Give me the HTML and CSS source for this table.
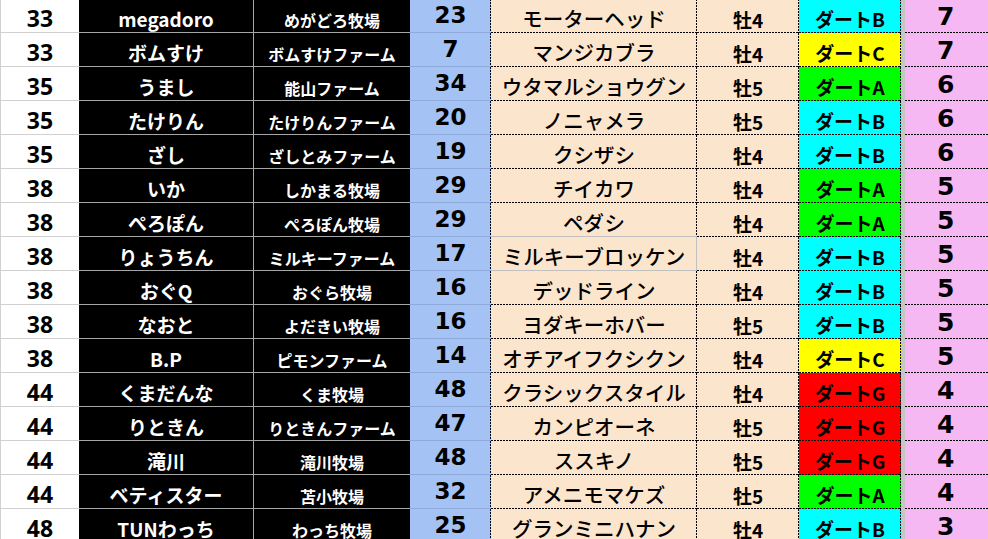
FILE: index.html
```html
<!DOCTYPE html>
<html lang="ja">
<head>
<meta charset="utf-8">
<title>Sheet</title>
<link rel="stylesheet" href="styles.css">
</head>
<body>
<div class="sheet">
  <div class="c c1">33</div><div class="c c2">megadoro</div><div class="c c3">めがどろ牧場</div><div class="c c4">23</div><div class="c c5">モーターヘッド</div><div class="c c6">牡4</div><div class="c c7 b">ダートB</div><div class="c c8">7</div>
  <div class="c c1">33</div><div class="c c2">ボムすけ</div><div class="c c3">ボムすけファーム</div><div class="c c4">7</div><div class="c c5">マンジカブラ</div><div class="c c6">牡4</div><div class="c c7 cc">ダートC</div><div class="c c8">7</div>
  <div class="c c1">35</div><div class="c c2">うまし</div><div class="c c3">能山ファーム</div><div class="c c4">34</div><div class="c c5">ウタマルショウグン</div><div class="c c6">牡5</div><div class="c c7 a">ダートA</div><div class="c c8">6</div>
  <div class="c c1">35</div><div class="c c2">たけりん</div><div class="c c3">たけりんファーム</div><div class="c c4">20</div><div class="c c5">ノニャメラ</div><div class="c c6">牡5</div><div class="c c7 b">ダートB</div><div class="c c8">6</div>
  <div class="c c1">35</div><div class="c c2">ざし</div><div class="c c3">ざしとみファーム</div><div class="c c4">19</div><div class="c c5">クシザシ</div><div class="c c6">牡4</div><div class="c c7 b">ダートB</div><div class="c c8">6</div>
  <div class="c c1">38</div><div class="c c2">いか</div><div class="c c3">しかまる牧場</div><div class="c c4">29</div><div class="c c5">チイカワ</div><div class="c c6">牡4</div><div class="c c7 a">ダートA</div><div class="c c8">5</div>
  <div class="c c1">38</div><div class="c c2">ぺろぽん</div><div class="c c3">ぺろぽん牧場</div><div class="c c4">29</div><div class="c c5">ペダシ</div><div class="c c6">牡4</div><div class="c c7 a">ダートA</div><div class="c c8">5</div>
  <div class="c c1">38</div><div class="c c2">りょうちん</div><div class="c c3">ミルキーファーム</div><div class="c c4">17</div><div class="c c5 boxed">ミルキーブロッケン</div><div class="c c6">牡4</div><div class="c c7 b">ダートB</div><div class="c c8">5</div>
  <div class="c c1">38</div><div class="c c2">おぐQ</div><div class="c c3">おぐら牧場</div><div class="c c4">16</div><div class="c c5">デッドライン</div><div class="c c6">牡4</div><div class="c c7 b">ダートB</div><div class="c c8">5</div>
  <div class="c c1">38</div><div class="c c2">なおと</div><div class="c c3">よだきい牧場</div><div class="c c4">16</div><div class="c c5">ヨダキーホバー</div><div class="c c6">牡5</div><div class="c c7 b">ダートB</div><div class="c c8">5</div>
  <div class="c c1">38</div><div class="c c2">B.P</div><div class="c c3">ピモンファーム</div><div class="c c4">14</div><div class="c c5">オチアイフクシクン</div><div class="c c6">牡4</div><div class="c c7 cc">ダートC</div><div class="c c8">5</div>
  <div class="c c1">44</div><div class="c c2">くまだんな</div><div class="c c3">くま牧場</div><div class="c c4">48</div><div class="c c5">クラシックスタイル</div><div class="c c6">牡4</div><div class="c c7 g">ダートG</div><div class="c c8">4</div>
  <div class="c c1">44</div><div class="c c2">りときん</div><div class="c c3">りときんファーム</div><div class="c c4">47</div><div class="c c5">カンピオーネ</div><div class="c c6">牡5</div><div class="c c7 g">ダートG</div><div class="c c8">4</div>
  <div class="c c1">44</div><div class="c c2">滝川</div><div class="c c3">滝川牧場</div><div class="c c4">48</div><div class="c c5">ススキノ</div><div class="c c6">牡5</div><div class="c c7 g">ダートG</div><div class="c c8">4</div>
  <div class="c c1">44</div><div class="c c2">ベティスター</div><div class="c c3">苫小牧場</div><div class="c c4">32</div><div class="c c5">アメニモマケズ</div><div class="c c6">牡5</div><div class="c c7 a">ダートA</div><div class="c c8">4</div>
  <div class="c c1">48</div><div class="c c2">TUNわっち</div><div class="c c3">わっち牧場</div><div class="c c4">25</div><div class="c c5">グランミニハナン</div><div class="c c6">牡4</div><div class="c c7 b">ダートB</div><div class="c c8">3</div>
</div>
</body>
</html>
```
FILE: styles.css
```css
html, body {
  margin: 0;
  padding: 0;
  background: #ffffff;
  overflow: hidden;
}

.sheet {
  display: grid;
  grid-template-columns: 79px 175px 156px 81px 206px 102px 106px 90px;
  grid-auto-rows: 34px;
  margin-top: -1px;
  font-family: "Noto Sans CJK JP", "Noto Sans", sans-serif;
  font-weight: 700;
  color: #000;
}

.c {
  box-sizing: border-box;
  display: flex;
  justify-content: center;
  align-items: center;
  line-height: 0.8;
  white-space: nowrap;
  overflow: hidden;
}

.c1 {
  background: #ffffff;
  border-left: 1px solid #d0d0d0;
  border-bottom: 1px solid #d0d0d0;
  font-family: "Noto Sans", sans-serif;
  font-size: 23px;
  padding-top: 6px;
}

.c2 {
  background: #000;
  color: #fff;
  border-right: 1px solid #a6a6a6;
  border-bottom: 1px solid #a6a6a6;
  font-size: 19px;
  padding-top: 6px;
}

.c3 {
  background: #000;
  color: #fff;
  border-bottom: 1px solid #a6a6a6;
  font-size: 16px;
  padding-top: 10px;
}

.c4 {
  background-color: #a4c2f4;
  background-image: linear-gradient(to bottom, #000 0 2px, transparent 2px 3px);
  background-size: 1px 3px;
  background-repeat: repeat-y;
  background-position: right top;
  border-bottom: 1px solid #8eaadb;
  font-family: "DejaVu Sans", sans-serif;
  font-size: 23px;
  padding-top: 0;
}

.c5, .c6, .c7 {
  background-image:
    linear-gradient(to right, #000 0 2px, transparent 2px 3px),
    linear-gradient(to bottom, #000 0 2px, transparent 2px 3px);
  background-size: 3px 1px, 1px 3px;
  background-repeat: repeat-x, repeat-y;
  background-position: left bottom, right top;
}

.c5 {
  background-color: #fce5cd;
  font-weight: 500;
  font-size: 20.5px;
  padding-top: 5px;
}

.c5.boxed {
  position: relative;
  overflow: visible;
}

.c5.boxed::after {
  content: "";
  position: absolute;
  left: 0;
  right: 0;
  top: -1px;
  bottom: 0;
  border: 1px solid #c0c0c0;
  border-left: none;
  pointer-events: none;
}

.c6 {
  background-color: #fce5cd;
  font-size: 19px;
  padding-top: 7px;
}

.c7 {
  border-right: 4px solid #c6c6c6;
  font-size: 19px;
  padding-top: 5px;
}

.c7.b { background-color: #00ffff; }
.c7.cc { background-color: #ffff00; }
.c7.a { background-color: #00ff00; }
.c7.g { background-color: #ff0000; }

.c8 {
  background-color: #f5b8f3;
  background-image: linear-gradient(to right, #000 0 2px, transparent 2px 3px);
  background-size: 3px 1px;
  background-repeat: repeat-x;
  background-position: left bottom;
  font-family: "DejaVu Sans", sans-serif;
  font-size: 25px;
  padding-top: 1px;
  justify-content: flex-start;
  padding-left: 32px;
}
```
